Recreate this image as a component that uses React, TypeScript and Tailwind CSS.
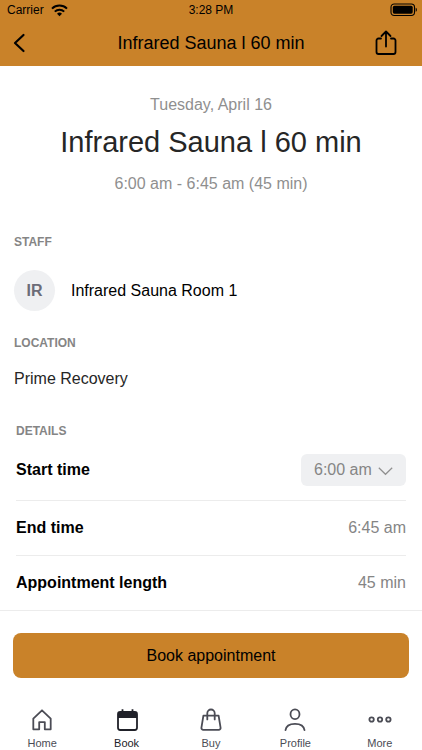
import React, { useState } from 'react';

const details = [
  { label: 'End time', value: '6:45 am' },
  { label: 'Appointment length', value: '45 min' },
];

const tabs = [
  { label: 'Home', icon: HomeIcon },
  { label: 'Book', icon: BookIcon },
  { label: 'Buy', icon: BuyIcon },
  { label: 'Profile', icon: ProfileIcon },
  { label: 'More', icon: MoreIcon },
];

function WifiIcon() {
  return (
    <svg width="17" height="13" viewBox="0 0 17 13" fill="none" stroke="black" strokeWidth="2">
      <path d="M1 4.6a10.8 10.8 0 0 1 15 0" />
      <path d="M3.8 7.6a6.8 6.8 0 0 1 9.4 0" />
      <path d="M8.5 12.2 6 9.7a3.6 3.6 0 0 1 5 0z" fill="black" stroke="none" />
    </svg>
  );
}

function BatteryIcon() {
  return (
    <svg width="28" height="14" viewBox="0 0 28 14" fill="none">
      <rect x="1" y="1" width="23.5" height="11.5" rx="3.2" stroke="black" strokeWidth="1.1" />
      <rect x="2.8" y="2.8" width="19.9" height="7.9" rx="1.6" fill="black" />
      <path d="M25.7 4.7c1.6.5 1.6 3.6 0 4.1z" fill="black" />
    </svg>
  );
}

function ShareIcon() {
  return (
    <svg
      width="22"
      height="26"
      viewBox="0 0 22 26"
      fill="none"
      stroke="black"
      strokeWidth="1.8"
      strokeLinecap="round"
      strokeLinejoin="round"
    >
      <path d="M6 8.5H3.5a2 2 0 0 0-2 2V22a2 2 0 0 0 2 2h15a2 2 0 0 0 2-2V10.5a2 2 0 0 0-2-2H16" />
      <path d="M11 16.5V1.5M6.5 6 11 1.5 15.5 6" />
    </svg>
  );
}

function HomeIcon() {
  return (
    <svg width="24" height="24" viewBox="0 0 24 24" fill="none" stroke="#4b4c55" strokeWidth="1.8" strokeLinejoin="round">
      <path d="M3.3 10.6 12 2.3l8.7 8.3v10.7h-5.9v-7.2H9.2v7.2H3.3z" />
    </svg>
  );
}

function BookIcon() {
  return (
    <svg width="24" height="24" viewBox="0 0 24 24" fill="none">
      <rect x="3" y="4" width="19" height="18" rx="2.2" stroke="#202129" strokeWidth="1.8" />
      <path d="M3 4h19v6H3zM6.6 1.2h1.8v3H6.6zM16.6 1.2h1.8v3h-1.8z" fill="#202129" />
    </svg>
  );
}

function BuyIcon() {
  return (
    <svg
      width="24"
      height="24"
      viewBox="0 0 24 24"
      fill="none"
      stroke="#4b4c55"
      strokeWidth="1.8"
      strokeLinecap="round"
      strokeLinejoin="round"
    >
      <path d="M4.4 7.6h15.2l2 12.2a1.8 1.8 0 0 1-1.8 2H4.2a1.8 1.8 0 0 1-1.8-2z" />
      <path d="M8.3 11.4V5.2a3.7 3.7 0 0 1 7.4 0v6.2" />
    </svg>
  );
}

function ProfileIcon() {
  return (
    <svg width="24" height="24" viewBox="0 0 24 24" fill="none" stroke="#4b4c55" strokeWidth="1.8" strokeLinecap="round">
      <ellipse cx="12" cy="6.2" rx="4.5" ry="4.9" />
      <path d="M2.5 22.2c.5-4.3 4.2-6.4 9.5-6.4s9 2.1 9.5 6.4" />
    </svg>
  );
}

function MoreIcon() {
  return (
    <svg width="24" height="24" viewBox="0 0 24 24" fill="none" stroke="#4b4c55" strokeWidth="1.8">
      <circle cx="3.6" cy="11.5" r="2.2" />
      <circle cx="12" cy="11.5" r="2.2" />
      <circle cx="20.4" cy="11.5" r="2.2" />
    </svg>
  );
}

function Header() {
  return (
    <header className="bg-[#c98229] text-black">
      <div className="grid h-5 grid-cols-3 items-center px-1 text-xs">
        <div className="flex items-center gap-[7px] pl-[3px]">
          <span>Carrier</span>
          <WifiIcon />
        </div>
        <span className="text-center">3:28 PM</span>
        <div className="flex justify-end">
          <BatteryIcon />
        </div>
      </div>
      <div className="grid h-[46px] grid-cols-[40px_1fr_40px] items-center px-3">
        <button type="button" aria-label="Back">
          <svg width="16" height="20" viewBox="0 0 16 20" fill="none" stroke="black" strokeWidth="2.2" strokeLinecap="round" strokeLinejoin="round">
            <path d="M11.5 2 3 10l8.5 8" />
          </svg>
        </button>
        <h1 className="text-center text-lg">Infrared Sauna l 60 min</h1>
        <button type="button" aria-label="Share" className="pl-[5px]">
          <ShareIcon />
        </button>
      </div>
    </header>
  );
}

export default function App() {
  const [start, setStart] = useState('6:00 am');

  return (
    <div className="flex min-h-screen flex-col bg-white font-['Liberation_Sans',Arial,sans-serif]">
      <Header />

      <main className="flex flex-col">
        <section className="flex flex-col items-center pt-[27px] text-[#8f8f8f]">
          <p className="leading-6">Tuesday, April 16</p>
          <h2 className="mt-1 text-[29px] leading-[43px] text-[#262626]">Infrared Sauna l 60 min</h2>
          <p className="mt-2 leading-6">6:00 am - 6:45 am (45 min)</p>
        </section>

        <section className="px-[14px] pt-[38px]">
          <h3 className="text-xs font-bold text-[#858585]">STAFF</h3>
          <div className="mt-5 flex items-center gap-4">
            <div className="flex size-[41px] items-center justify-center rounded-full bg-[#eff0f2] font-bold text-[#6c6c78]">
              IR
            </div>
            <span className="text-black">Infrared Sauna Room 1</span>
          </div>
        </section>

        <section className="px-[14px] pt-6">
          <h3 className="text-xs font-bold text-[#858585]">LOCATION</h3>
          <p className="mt-4 text-[#262626]">Prime Recovery</p>
        </section>

        {/* details */}
        <section className="px-4 pt-8">
          <h3 className="text-xs font-bold text-[#858585]">DETAILS</h3>
          <div className="flex h-[62px] items-center justify-between border-b border-[#ececec]">
            <label htmlFor="start" className="font-bold text-black">
              Start time
            </label>
            <div className="relative">
              <select
                id="start"
                value={start}
                onChange={(e) => setStart(e.target.value)}
                className="h-8 w-[105px] appearance-none rounded-md bg-[#eff0f2] pl-[13px] text-[#858585]"
              >
                <option>6:00 am</option>
                <option>6:15 am</option>
                <option>6:30 am</option>
              </select>
              <svg className="pointer-events-none absolute top-3 right-[13px]" width="15" height="10" viewBox="0 0 15 10" fill="none" stroke="#909090" strokeWidth="1.2">
                <path d="M.8 1.8 7.5 8.3l6.7-6.5" />
              </svg>
            </div>
          </div>
          {details.map((d) => (
            <div
              key={d.label}
              className="flex h-[55px] items-center justify-between border-b border-[#ececec] last:h-[54px] last:border-b-0"
            >
              <span className="font-bold text-black">{d.label}</span>
              <span className="text-[#858585]">{d.value}</span>
            </div>
          ))}
        </section>
      </main>

      <footer className="mt-auto border-t border-[#ececec] pt-[22px]">
        <div className="px-[13px]">
          <button type="button" className="h-[45px] w-full rounded-lg bg-[#c98229] text-black">
            Book appointment
          </button>
        </div>
        <nav className="grid grid-cols-5 pt-[30px]">
          {tabs.map(({ label, icon: Icon }) => (
            <a
              key={label}
              href="#"
              className={`flex flex-col items-center gap-1 text-[11px] leading-[14px] ${label === 'Book' ? 'text-[#202129]' : 'text-[#4b4c55]'}`}
            >
              <Icon />
              {label}
            </a>
          ))}
        </nav>
      </footer>
    </div>
  );
}
